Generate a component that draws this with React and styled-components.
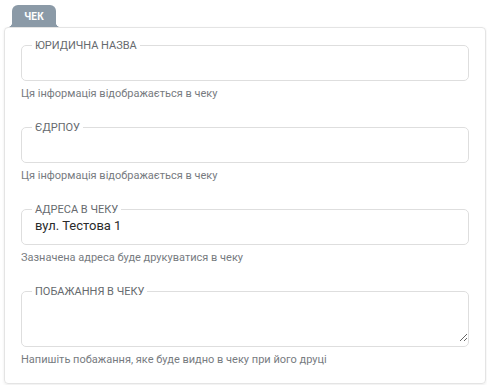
import React from 'react'
import styled, { createGlobalStyle } from 'styled-components'

const GlobalStyle = createGlobalStyle`
  body {
    margin: 0;
    background: #ffffff;
    font-family: Roboto, "Liberation Sans", sans-serif;
  }
`

const Page = styled.div`
  width: 487px;
  height: 385px;
  box-sizing: border-box;
  padding-top: 5px;
`

const TabRow = styled.div`
  display: flex;
  padding-left: 12px;
`

const Tab = styled.div`
  position: relative;
  width: 44px;
  height: 22px;
  display: flex;
  align-items: center;
  justify-content: center;
  background: #8b9aa7;
  border-radius: 6px 6px 0 0;
  color: #ffffff;
  font-size: 10px;
  font-weight: 700;
  letter-spacing: 0.2px;

  &::before,
  &::after {
    content: '';
    position: absolute;
    bottom: 0;
    width: 5px;
    height: 5px;
  }
  &::before {
    left: -5px;
    background: radial-gradient(circle at 0 0, transparent 5px, #8b9aa7 5.5px);
  }
  &::after {
    right: -5px;
    background: radial-gradient(circle at 100% 0, transparent 5px, #8b9aa7 5.5px);
  }
`

const Card = styled.div`
  margin: 0 1px 0 4px;
  height: 357px;
  box-sizing: border-box;
  border: 1px solid #e4e4e4;
  border-radius: 4px;
  box-shadow: 0 1px 3px rgba(0, 0, 0, 0.08);
  padding: 11px 16px 0 16px;
  display: flex;
  flex-direction: column;
  gap: 21px;
`

const Field = styled.div`
  display: flex;
  flex-direction: column;
`

const Box = styled.fieldset`
  display: block;
  margin: 0;
  padding: 0;
  border: 1px solid #dedede;
  border-radius: 5px;
  height: ${p => p.$tall ? '62px' : '42px'};
  box-sizing: border-box;
  min-width: 0;
`

const Legend = styled.legend`
  margin-left: 10px;
  padding: 0 3px;
  font-size: 11px;
  line-height: 13px;
  color: #666a6e;
  text-transform: uppercase;
`

const Input = styled.input`
  display: block;
  box-sizing: border-box;
  margin: 0;
  border: none;
  outline: none;
  height: 22px;
  padding: 0 8px 3px 13px;
  width: 100%;
  font-family: Roboto, "Liberation Sans", sans-serif;
  font-size: 13px;
  color: #2b2b2b;
  background: transparent;
`

const Area = styled.textarea`
  display: block;
  box-sizing: border-box;
  margin: 0;
  border: none;
  outline: none;
  height: 44px;
  width: 100%;
  padding: 0 8px 0 13px;
  resize: vertical;
  font-family: Roboto, "Liberation Sans", sans-serif;
  font-size: 13px;
  background: transparent;
`

const Hint = styled.div`
  margin-top: 6px;
  font-size: 11px;
  line-height: 13px;
  color: #777b7f;
`

const fields = [
  { label: 'Юридична назва', value: '', hint: 'Ця інформація відображається в чеку' },
  { label: 'ЄДРПОУ', value: '', hint: 'Ця інформація відображається в чеку' },
  { label: 'Адреса в чеку', value: 'вул. Тестова 1', hint: 'Зазначена адреса буде друкуватися в чеку' },
]

export default function App() {
  return (
    <Page>
      <GlobalStyle />
      <TabRow>
        <Tab>ЧЕК</Tab>
      </TabRow>
      <Card>
        {fields.map(f => (
          <Field key={f.label}>
            <Box>
              <Legend>{f.label}</Legend>
              <Input defaultValue={f.value} />
            </Box>
            <Hint>{f.hint}</Hint>
          </Field>
        ))}
        <Field>
          <Box $tall>
            <Legend>Побажання в чеку</Legend>
            <Area />
          </Box>
          <Hint>Напишіть побажання, яке буде видно в чеку при його друці</Hint>
        </Field>
      </Card>
    </Page>
  )
}
